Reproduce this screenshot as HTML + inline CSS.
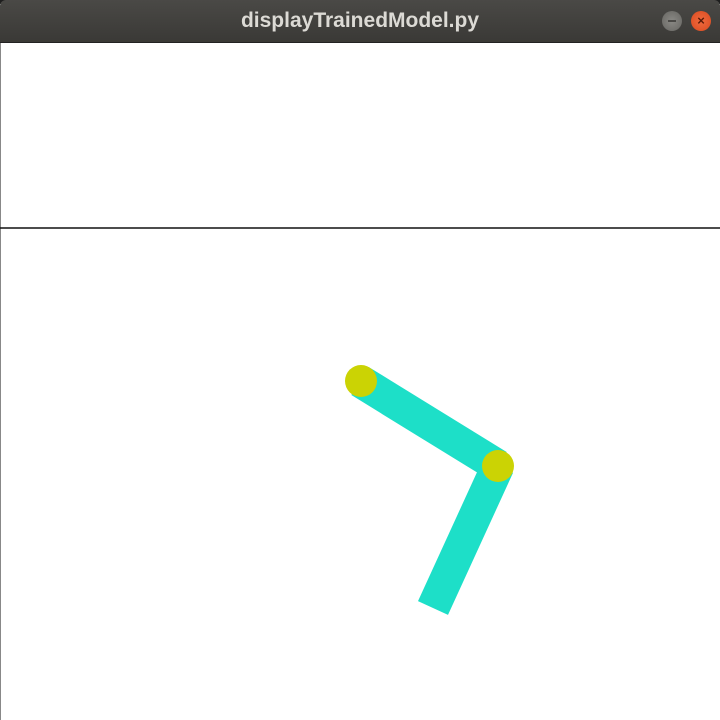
<!DOCTYPE html>
<html><head><style>
body{margin:0;width:720px;height:720px;overflow:hidden;background:#fff;position:relative;font-family:"Liberation Sans",sans-serif}
.bar{position:absolute;left:0;top:0;width:720px;height:42px;background:linear-gradient(#4a4946,#3a3936);border-radius:6px 6px 0 0;border-bottom:1px solid #222}
.title{position:absolute;left:0;width:720px;top:9px;text-align:center;color:#dcdad5;font-weight:bold;font-size:21px}
.btn{position:absolute;top:11px;width:20px;height:20px;border-radius:50%}
</style></head><body>
<div style="position:absolute;left:0;top:0;width:720px;height:4px;background:#1e1e1e"></div>
<div class="bar"><div class="title">displayTrainedModel.py</div>
<div class="btn" style="left:662px;background:radial-gradient(#8a8985,#666561)"><div style="position:absolute;left:6px;top:9px;width:8px;height:2px;background:#4a4946"></div></div>
<div class="btn" style="left:691px;background:radial-gradient(#f06a3e,#d94a1f);color:#5a1a08;font-size:13px;line-height:20px;text-align:center;font-weight:bold">×</div>
</div>
<div style="position:absolute;left:0;top:43px;width:1px;height:677px;background:#888"></div>
<svg width="720" height="720" style="position:absolute;left:0;top:0">
<line x1="0" y1="228" x2="720" y2="228" stroke="#111" stroke-width="1.5"/>
<line x1="360" y1="381" x2="498" y2="466" stroke="#1ddfc8" stroke-width="33"/>
<line x1="498" y1="466" x2="433" y2="608" stroke="#1ddfc8" stroke-width="33"/>
<circle cx="361" cy="381" r="16" fill="#cbd304"/>
<circle cx="498" cy="466" r="16" fill="#cbd304"/>
</svg>
</body></html>
